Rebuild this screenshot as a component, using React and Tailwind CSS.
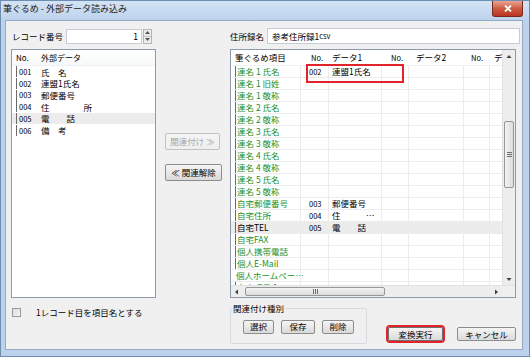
import React from 'react';

const FONT = "font-['Noto_Sans_CJK_JP','Noto_Sans_CJK_SC',sans-serif]";

const leftRows = [
  { no: '001', text: '氏　名' },
  { no: '002', text: '連盟1氏名' },
  { no: '003', text: '郵便番号' },
  { no: '004', text: '住　　　　所' },
  { no: '005', text: '電　　話', sel: true },
  { no: '006', text: '備　考' },
];

const gridRows = [
  { name: '連名 1 氏名', no: '002', data: '連盟1氏名' },
  { name: '連名 1 旧姓' },
  { name: '連名 1 敬称' },
  { name: '連名 2 氏名' },
  { name: '連名 2 敬称' },
  { name: '連名 3 氏名' },
  { name: '連名 3 敬称' },
  { name: '連名 4 氏名' },
  { name: '連名 4 敬称' },
  { name: '連名 5 氏名' },
  { name: '連名 5 敬称' },
  { name: '自宅郵便番号', no: '003', data: '郵便番号' },
  { name: '自宅住所', no: '004', data: '住　　　…' },
  { name: '自宅TEL', no: '005', data: '電　　話', sel: true },
  { name: '自宅FAX' },
  { name: '個人携帯電話' },
  { name: '個人E-Mail' },
  { name: '個人ホームペー…' },
  { name: '自由項目 1' },
];

function Btn({ children, className = '', disabled, red }) {
  const tone = disabled
    ? 'border-[#c2c2c2] text-[#a6a6a6] from-[#f4f4f4] to-[#efefef]'
    : red
    ? 'border-[#707070] text-black from-[#f5f5f5] to-[#dadada] outline-2 outline-[#e0242a]'
    : 'border-[#8c8c8c] text-black from-[#f5f5f5] to-[#dadada]';
  return (
    <div
      className={`flex items-center justify-center rounded-[2px] border bg-linear-to-b text-[8.5px] leading-none ${tone} ${className}`}
    >
      {children}
    </div>
  );
}

function ScrollArrow({ dir }) {
  const d = {
    up: 'M1.5 5 L4 2 L6.5 5 Z',
    down: 'M1.5 3 L4 6 L6.5 3 Z',
    left: 'M5 1.5 L2 4 L5 6.5 Z',
    right: 'M3 1.5 L6 4 L3 6.5 Z',
  }[dir];
  return (
    <svg width="8" height="8" viewBox="0 0 8 8">
      <path d={d} fill="#404040" />
    </svg>
  );
}

function LeftList() {
  return (
    <div className="w-[145px] h-[249px] border border-[#8e9aab] bg-white overflow-hidden">
      <div className="h-[16px] flex items-center text-[8px] border-b border-[#eef0f2] bg-linear-to-b from-white to-[#f7f8f9]">
        <span className="ml-[4px] w-[25px]">No.</span>
        <span>外部データ</span>
      </div>
      {leftRows.map((r) => (
        <div
          key={r.no}
          className={`h-[11.7px] flex items-center text-[8.5px] leading-none ${r.sel ? 'bg-[#ececec]' : ''}`}
        >
          <span className="ml-[4px] w-[1px] h-[11px] bg-[#6a6a6a]" />
          <span className="ml-[2px] w-[22px] text-[7.5px]">{r.no}</span>
          <span className="whitespace-pre">{r.text}</span>
        </div>
      ))}
    </div>
  );
}

function Grid() {
  const cols = 'border-r border-[#ececec]';
  return (
    <div className="relative w-[286px] h-[249px] border border-[#8e9aab] bg-white flex flex-col overflow-hidden">
      <div className="flex h-[235px]">
        <div className="w-[271px] overflow-hidden">
          <div className="h-[16px] flex items-center text-[8.5px] leading-none border-b border-[#eef0f2]">
            <span className="w-[70px] pl-[4px]">筆ぐるめ項目</span>
            <span className="w-[28px] pl-[10px] text-[7.5px]">No.</span>
            <span className="w-[53px] pl-[3px]">データ1</span>
            <span className="w-[27px] pl-[9px] text-[7.5px]">No.</span>
            <span className="w-[55px] pl-[7px]">データ2</span>
            <span className="w-[26px] pl-[7px] text-[7.5px]">No.</span>
            <span className="w-[12px] pl-[4px] overflow-hidden whitespace-nowrap">デ</span>
          </div>
          {gridRows.map((r) => (
            <div
              key={r.name}
              className={`h-[12px] flex text-[8.5px] leading-none border-b border-[#ececec] ${r.sel ? 'bg-[#ececec]' : ''}`}
            >
              <div className={`w-[70px] flex items-center ${cols}`}>
                <span className="ml-[4px] w-[1px] h-[11px] bg-[#6a6a6a]" />
                <span className={`ml-[1px] whitespace-nowrap ${r.sel ? 'text-black' : 'text-[#23912a]'}`}>
                  {r.name}
                </span>
              </div>
              <div className={`w-[28px] flex items-center pl-[8px] text-[7.5px] ${cols}`}>{r.no}</div>
              <div className={`w-[53px] flex items-center pl-[3px] whitespace-pre ${cols}`}>{r.data}</div>
              <div className={`w-[27px] ${cols}`} />
              <div className={`w-[55px] ${cols}`} />
              <div className={`w-[26px] ${cols}`} />
              <div className="w-[12px]" />
            </div>
          ))}
        </div>
        <div className="w-[13px] flex flex-col bg-[#ededed] border-l border-[#e2e2e2]">
          <div className="h-[13px] flex items-center justify-center">
            <ScrollArrow dir="up" />
          </div>
          <div className="flex-1 relative">
            <div className="absolute left-[1px] right-[1px] top-[58px] h-[67px] rounded-[2px] border border-[#979797] bg-linear-to-r from-[#f3f3f3] to-[#dcdcdc] flex items-center justify-center">
              <div className="flex flex-col gap-[1px]">
                <span className="block w-[5px] h-[1px] bg-[#6e6e6e]" />
                <span className="block w-[5px] h-[1px] bg-[#6e6e6e]" />
                <span className="block w-[5px] h-[1px] bg-[#6e6e6e]" />
              </div>
            </div>
          </div>
          <div className="h-[13px] flex items-center justify-center">
            <ScrollArrow dir="down" />
          </div>
        </div>
      </div>
      <div className="flex h-[12px] border-t border-[#e2e2e2]">
        <div className="w-[271px] flex bg-[#ededed]">
          <div className="w-[12px] flex items-center justify-center">
            <ScrollArrow dir="left" />
          </div>
          <div className="flex-1 relative">
            <div className="absolute top-[1px] bottom-[1px] left-[2px] w-[140px] rounded-[2px] border border-[#979797] bg-linear-to-b from-[#f3f3f3] to-[#dcdcdc] flex items-center justify-center gap-[1px]">
              <span className="block w-[1px] h-[5px] bg-[#6e6e6e]" />
              <span className="block w-[1px] h-[5px] bg-[#6e6e6e]" />
              <span className="block w-[1px] h-[5px] bg-[#6e6e6e]" />
            </div>
          </div>
          <div className="w-[12px] flex items-center justify-center">
            <ScrollArrow dir="right" />
          </div>
        </div>
        <div className="w-[13px] bg-[#f0f0f0]" />
      </div>
      <div className="absolute left-[75px] top-[14px] w-[98px] h-[19px] border-2 border-[#e0242a]" />
    </div>
  );
}

export default function App() {
  return (
    <div className={`w-[530px] h-[357px] flex flex-col bg-[#bcd2ec] border border-[#6f8db3] text-black ${FONT}`}>
      <div className="h-[19px] flex items-start justify-between bg-linear-to-b from-[#d3e3f5] to-[#bdd3ec]">
        <span className="ml-[2px] mt-[3px] text-[9px] leading-none text-[#1b1b1b]">筆ぐるめ - 外部データ読み込み</span>
        <div className="mr-[6px] w-[31px] h-[16px] rounded-b-[3px] border border-t-0 border-[#7a2a20] bg-linear-to-b from-[#e9a595] via-[#cf5a42] to-[#b8341f] flex items-center justify-center">
          <svg width="8" height="7" viewBox="0 0 8 7">
            <path d="M1 0.5 L7 6.5 M7 0.5 L1 6.5" stroke="#ffffff" strokeWidth="1.8" />
          </svg>
        </div>
      </div>
      <div className="flex-1 pl-[4px] pr-[6px] pb-[6px]">
        <div className="w-[518px] h-[330px] bg-[#f0f0f0] border border-[#95aac4] pl-[5px]">
          <div className="mt-[7px] h-[16px] flex items-center">
            <div className="w-[146px] flex items-center">
              <span className="ml-[1px] w-[54px] text-[8.5px] leading-none">レコード番号</span>
              <div className="w-[76px] h-[15px] bg-white border border-[#c5cdd6] flex items-center justify-end pr-[3px] text-[8.5px]">
                1
              </div>
              <div className="ml-[1px] w-[9px] h-[15px] flex flex-col border border-[#b5b5b5] bg-[#ececec]">
                <div className="flex-1 flex items-center justify-center border-b border-[#c5c5c5]">
                  <svg width="5" height="3" viewBox="0 0 5 3"><path d="M0 3 L2.5 0 L5 3 Z" fill="#555" /></svg>
                </div>
                <div className="flex-1 flex items-center justify-center">
                  <svg width="5" height="3" viewBox="0 0 5 3"><path d="M0 0 L2.5 3 L5 0 Z" fill="#555" /></svg>
                </div>
              </div>
            </div>
            <span className="ml-[73px] w-[37px] text-[8.5px] leading-none">住所録名</span>
            <div className="w-[253px] h-[16px] bg-white border border-[#c5cdd6] flex items-center pl-[4px] text-[8.5px]">
              参考住所録1<span className="text-[7.5px]">csv</span>
            </div>
          </div>
          <div className="mt-[5px] flex">
            <LeftList />
            <div className="ml-[9px] w-[57px] pt-[84px] flex flex-col gap-[14px]">
              <Btn disabled className="w-[55px] h-[17px]">関連付け ≫</Btn>
              <Btn className="w-[57px] h-[17px]">≪ 関連解除</Btn>
            </div>
            <div className="ml-[8px]">
              <Grid />
            </div>
          </div>
          <div className="flex">
            <div className="w-[219px] pt-[10px] flex items-start">
              <span className="ml-[1px] w-[9px] h-[9px] border border-[#9a9a9a] bg-linear-to-br from-[#dcdcdc] to-[#f6f6f6]" />
              <span className="ml-[15px] text-[8.5px] leading-[9px]">1レコード目を項目名とする</span>
            </div>
            <fieldset className="w-[137px] h-[40px] mt-[6px] border border-[#d5dbe1] rounded-[2px] px-[12px]">
              <legend className="ml-[-11px] px-[1px] text-[8.5px] leading-none">関連付け種別</legend>
              <div className="mt-[7px] flex gap-[7px]">
                <Btn className="w-[31px] h-[14px]">選択</Btn>
                <Btn className="w-[34px] h-[14px]">保存</Btn>
                <Btn className="w-[32px] h-[14px]">削除</Btn>
              </div>
            </fieldset>
            <div className="ml-[21px] pt-[29px] flex gap-[14px]">
              <Btn red className="w-[55px] h-[14px]">変換実行</Btn>
              <Btn className="w-[59px] h-[14px]">キャンセル</Btn>
            </div>
          </div>
        </div>
      </div>
    </div>
  );
}
